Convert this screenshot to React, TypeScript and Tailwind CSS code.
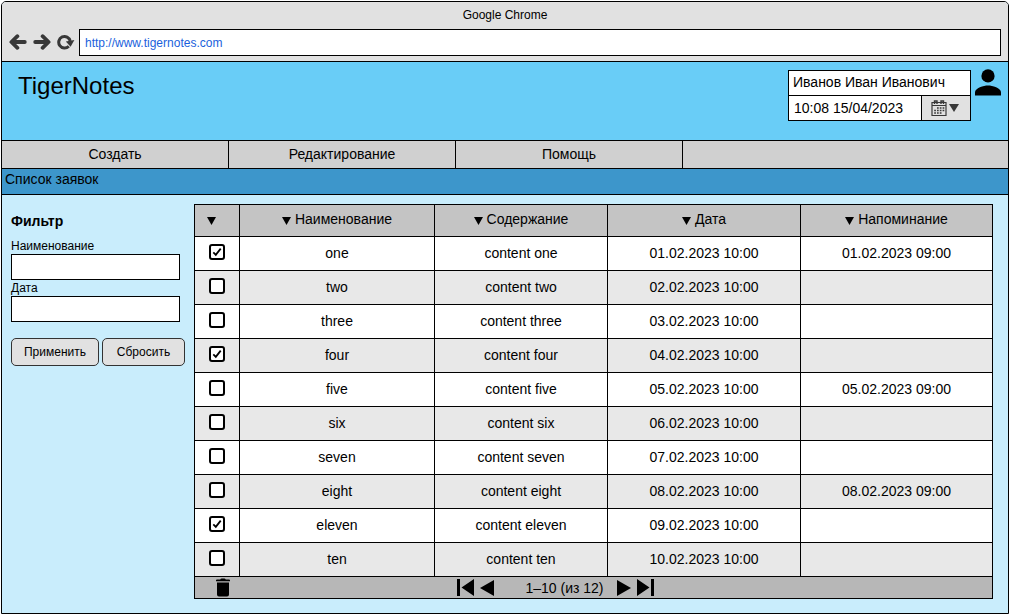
import React, { useState } from "react";

type Row = { name: string; content: string; date: string; reminder?: string; done?: boolean };

const initialRows: Row[] = [
  { name: "one", content: "content one", date: "01.02.2023 10:00", reminder: "01.02.2023 09:00", done: true },
  { name: "two", content: "content two", date: "02.02.2023 10:00" },
  { name: "three", content: "content three", date: "03.02.2023 10:00" },
  { name: "four", content: "content four", date: "04.02.2023 10:00", done: true },
  { name: "five", content: "content five", date: "05.02.2023 10:00", reminder: "05.02.2023 09:00" },
  { name: "six", content: "content six", date: "06.02.2023 10:00" },
  { name: "seven", content: "content seven", date: "07.02.2023 10:00" },
  { name: "eight", content: "content eight", date: "08.02.2023 10:00", reminder: "08.02.2023 09:00" },
  { name: "eleven", content: "content eleven", date: "09.02.2023 10:00", done: true },
  { name: "ten", content: "content ten", date: "10.02.2023 10:00" },
];

const menu = ["Создать", "Редактирование", "Помощь"];
const columns = ["Наименование", "Содержание", "Дата", "Напоминание"];

function Triangle() {
  return (
    <svg viewBox="0 0 9 8" className="h-2 w-[9px] shrink-0" aria-hidden="true">
      <path d="M0 0h9L4.5 8z" />
    </svg>
  );
}

function Arrow({ flip = false }: { flip?: boolean }) {
  return (
    <svg viewBox="0 0 18 16" className={flip ? "h-4 w-[18px] rotate-180" : "h-4 w-[18px]"} fill="none" stroke="#383838" strokeWidth="3.8" strokeLinecap="round" strokeLinejoin="round" aria-hidden="true">
      <path d="M8.4 2.2L2.4 8l6 5.8M3 8h12.8" />
    </svg>
  );
}

function Check({ label, defaultChecked }: { label: string; defaultChecked?: boolean }) {
  const [on, setOn] = useState(!!defaultChecked);
  return (
    <span className="grid size-4 place-items-center">
      <input
        type="checkbox"
        aria-label={label}
        checked={on}
        onChange={() => setOn(!on)}
        className="col-start-1 row-start-1 size-4 appearance-none rounded-[3px] border-2 border-black bg-white"
      />
      {on && (
        <svg viewBox="0 0 16 16" className="pointer-events-none col-start-1 row-start-1 size-4" fill="none" stroke="#000" strokeWidth="1.8" aria-hidden="true">
          <path d="M4.3 8.4L6.8 10.8l4.9-6.2" />
        </svg>
      )}
    </span>
  );
}

function Field({ id, label }: { id: string; label: string }) {
  return (
    <div>
      <label htmlFor={id} className="block text-xs leading-4">{label}</label>
      <input id={id} type="text" className="block h-[26px] w-full border border-black bg-white px-1 text-xs" />
    </div>
  );
}

export default function App() {
  return (
    <div className="pt-px pr-0.5 pb-px pl-px font-['Liberation_Sans',Arial,sans-serif] text-sm text-black">
      <div className="overflow-hidden rounded-t-[5px] border border-black bg-[#c9edfc]">
        <div className="border-b border-black bg-[#e1e1e1] px-[7px] pb-[5px]">
          <div className="flex h-[27px] items-center justify-center pb-0.5 text-xs">Google Chrome</div>
          <div className="flex items-center">
            <div className="flex items-center gap-1.5 pr-1 pb-0.5">
              <button type="button" aria-label="Назад"><Arrow /></button>
              <button type="button" aria-label="Вперёд"><Arrow flip /></button>
              <button type="button" aria-label="Обновить">
                <svg viewBox="0 0 18 16" className="h-4 w-[18px]" aria-hidden="true">
                  <path d="M11.8 12.2A5.8 5.8 0 1 1 13.2 7" fill="none" stroke="#383838" strokeWidth="3" />
                  <path d="M8.8 7.4L17.4 6l-3.8 6.8z" fill="#383838" />
                </svg>
              </button>
            </div>
            <input
              type="text"
              aria-label="Адрес"
              defaultValue="http://www.tigernotes.com"
              className="h-[27px] min-w-0 flex-1 border border-black bg-white px-[5px] text-xs text-[#1a5fdc]"
            />
          </div>
        </div>

        <header className="flex h-[79px] items-start justify-between border-b border-black bg-[#69cdf7] pr-[7px] pl-4">
          <h1 className="pt-2.5 text-2xl leading-7">TigerNotes</h1>
          <div className="flex items-start gap-1">
            <div className="mt-2 w-[183px] border border-black bg-white">
              <div className="flex h-[25px] items-center border-b border-black px-1 pb-0.5">Иванов Иван Иванович</div>
              <div className="flex h-6">
                <div className="flex flex-1 items-center border-r border-black px-[5px]">10:08 15/04/2023</div>
                <button type="button" aria-label="Выбрать дату" className="flex w-12 items-center justify-center gap-0.5 bg-[#e1e1e1] pr-0.5">
                  <svg viewBox="0 0 16 16" className="size-4" fill="none" stroke="#383838" aria-hidden="true">
                    <path d="M1 2.5h14v13H1zM1 5.5h14" strokeWidth="1.2" />
                    <path d="M3.5 4V1h2.5v3M10 4V1h2.5v3" strokeWidth="1.4" />
                    <path d="M6 8h7.7M3.2 10.5h10.5M3.2 13h7.7" strokeWidth="1.6" strokeDasharray="1.7 1.1" />
                  </svg>
                  <svg viewBox="0 0 10 8" className="h-2 w-2.5" fill="#383838" aria-hidden="true"><path d="M0 0h10L5 8z" /></svg>
                </button>
              </div>
            </div>
            <svg viewBox="0 0 26 27" className="mt-[7px] h-[27px] w-[26px]" aria-label="Профиль" role="img">
              <circle cx="13" cy="6.9" r="6.6" />
              <path d="M0 26.5v-3.2C0 19 8.7 16.5 13 16.5S26 19 26 23.3v3.2z" />
            </svg>
          </div>
        </header>

        <nav className="flex h-7 border-b border-black bg-[#d0d0d0]">
          {menu.map((item) => (
            <a key={item} href="#" className="flex w-[227px] items-center justify-center border-r border-black pb-0.5">{item}</a>
          ))}
        </nav>

        <h2 className="h-[26px] border-b border-black bg-[#3d96cb] px-[3px] pt-0.5 leading-4">Список заявок</h2>

        <div className="flex items-start pr-[15px] pb-3.5">
          <form className="w-48 shrink-0 pt-[18px] pl-[9px]" onSubmit={(e) => e.preventDefault()}>
            <h3 className="pb-[9px] text-sm leading-4 font-bold">Фильтр</h3>
            <div className="w-[169px]">
              <Field id="filter-name" label="Наименование" />
              <Field id="filter-date" label="Дата" />
            </div>
            <div className="flex gap-[3px] pt-4">
              <button type="submit" className="h-7 w-[88px] rounded-[5px] border border-[#333] bg-[#e1e1e1] text-xs">Применить</button>
              <button type="reset" className="h-7 w-[83px] rounded-[5px] border border-[#333] bg-[#e1e1e1] text-xs">Сбросить</button>
            </div>
          </form>

          <div className="min-w-0 flex-1 pt-[9px]">
            <table className="w-full table-fixed border-collapse text-center">
              <colgroup>
                <col className="w-[45px]" />
                <col className="w-[195px]" />
                <col className="w-[173px]" />
                <col className="w-[193px]" />
                <col />
              </colgroup>
              <thead>
                <tr className="h-8 bg-[#c4c4c4]">
                  <th className="border border-black p-0" aria-label="Выбор">
                    <button type="button" aria-label="Сортировать" className="flex pl-3"><Triangle /></button>
                  </th>
                  {columns.map((c) => (
                    <th key={c} className="border border-black p-0 pb-0.5 font-normal">
                      <button type="button" className="inline-flex items-center gap-1">
                        <span className="pt-1"><Triangle /></span>{c}
                      </button>
                    </th>
                  ))}
                </tr>
              </thead>
              <tbody>
                {initialRows.map((r) => (
                  <tr key={r.name} className="h-[34px] bg-white even:bg-[#e8e8e8]">
                    <td className="border border-black p-0 pb-1 pl-3.5"><Check label={r.name} defaultChecked={r.done} /></td>
                    <td className="border border-black p-0 pb-0.5">{r.name}</td>
                    <td className="border border-black p-0 pb-0.5">{r.content}</td>
                    <td className="border border-black p-0 pb-0.5">{r.date}</td>
                    <td className="border border-black p-0 pb-0.5">{r.reminder}</td>
                  </tr>
                ))}
              </tbody>
            </table>
            <div className="grid h-[22px] grid-cols-[1fr_auto_1fr] items-center border border-t-0 border-black bg-[#b7b7b7]">
              <button type="button" aria-label="Удалить" className="ml-5 w-4">
                <svg viewBox="0 0 16 19" className="h-[19px] w-4" aria-hidden="true">
                  <path d="M1 2.4q0-.8 1-.8h3.2q.6-1 1.5-1h2.6q.9 0 1.5 1H14q1 0 1 .8v.8H1zM2 4.4h12v12.2q0 2-2 2H4q-2 0-2-2z" />
                </svg>
              </button>
              <div className="flex items-center pr-[76px]">
                <button type="button" aria-label="Первая страница">
                  <svg viewBox="0 0 17 17" className="size-[17px]" aria-hidden="true"><path d="M0 0h3v17H0zM17 0v17L4.5 8.5z" /></svg>
                </button>
                <button type="button" aria-label="Предыдущая страница" className="ml-1.5">
                  <svg viewBox="0 0 14 16" className="h-4 w-3.5" aria-hidden="true"><path d="M14 0v16L0 8z" /></svg>
                </button>
                <span className="mr-[13px] ml-[31px]">1–10 (из 12)</span>
                <button type="button" aria-label="Следующая страница">
                  <svg viewBox="0 0 14 16" className="h-4 w-3.5" aria-hidden="true"><path d="M0 0v16l14-8z" /></svg>
                </button>
                <button type="button" aria-label="Последняя страница" className="ml-1.5">
                  <svg viewBox="0 0 17 17" className="size-[17px]" aria-hidden="true"><path d="M14 0h3v17h-3zM0 0v17l12.5-8.5z" /></svg>
                </button>
              </div>
            </div>
          </div>
        </div>
      </div>
    </div>
  );
}
